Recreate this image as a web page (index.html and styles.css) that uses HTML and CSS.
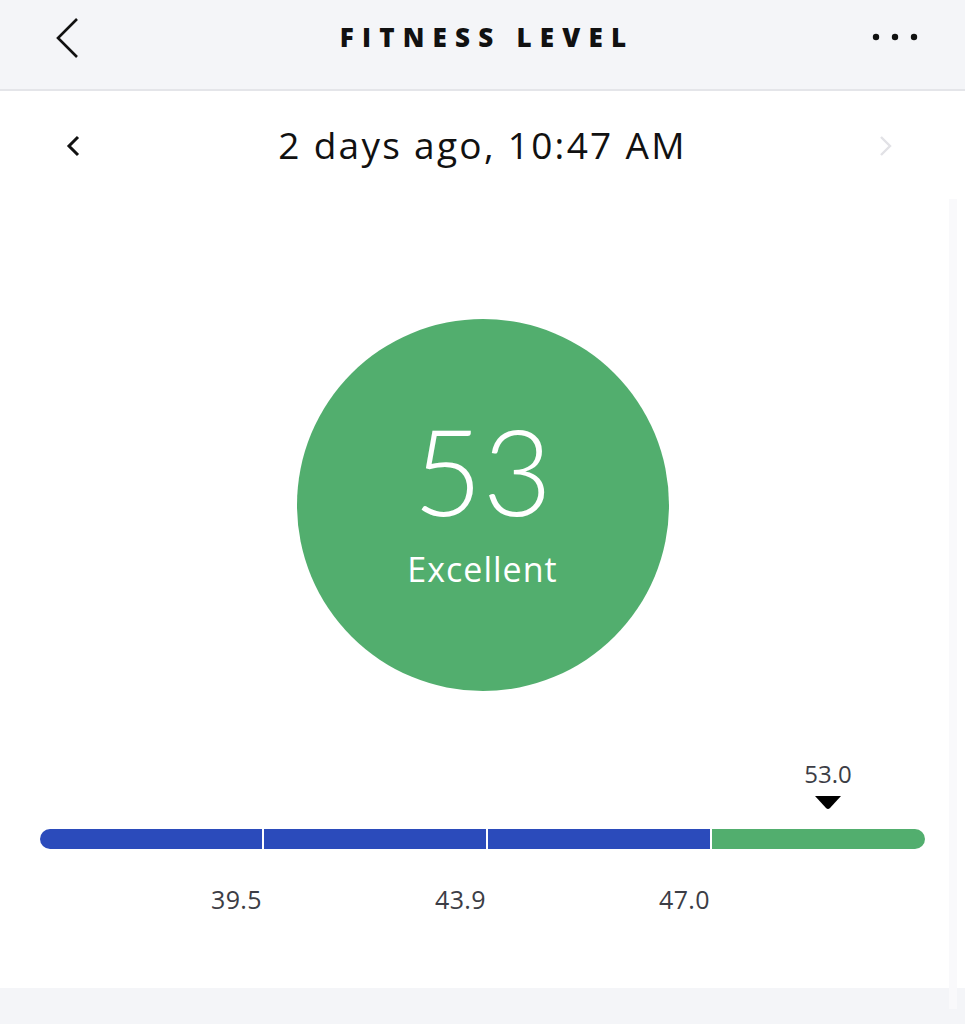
FILE: index.html
```html
<!DOCTYPE html>
<html lang="en">
<head>
    <meta charset="UTF-8">
    <meta name="viewport" content="width=device-width, initial-scale=1.0">
    <title>Fitness Level</title>
    <link rel="stylesheet" href="styles.css">
</head>
<body>
    <div class="topbar">
        <svg class="back" width="30" height="44" viewBox="0 0 30 44">
            <path d="M23 3 L4 22 L23 41" fill="none" stroke="#111" stroke-width="2.6"/>
        </svg>
        <h1 class="title">FITNESS LEVEL</h1>
        <svg class="more" width="50" height="12" viewBox="0 0 50 12">
            <circle cx="6" cy="6" r="3.2" fill="#111"/>
            <circle cx="25" cy="6" r="3.2" fill="#111"/>
            <circle cx="44" cy="6" r="3.2" fill="#111"/>
        </svg>
    </div>

    <div class="content">
        <div class="daterow">
            <svg width="20" height="24" viewBox="0 0 20 24">
                <path d="M14 3 L5 12 L14 21" fill="none" stroke="#111" stroke-width="3"/>
            </svg>
            <p class="date">2 days ago, 10:47 AM</p>
            <svg width="20" height="24" viewBox="0 0 20 24">
                <path d="M6 3 L15 12 L6 21" fill="none" stroke="#e2e2e6" stroke-width="2.4"/>
            </svg>
        </div>

        <div class="score">
            <div class="circle">
                <span class="num">53</span>
                <span class="label">Excellent</span>
            </div>
        </div>

        <div class="scale">
            <div class="marker">
                <span>53.0</span>
                <svg width="28" height="16" viewBox="0 0 28 16">
                    <path d="M1 1 L27 1 L16 13 Q14 15 12 13 Z" fill="#000"/>
                </svg>
            </div>
            <div class="bar">
                <div class="seg blue"></div>
                <div class="seg blue"></div>
                <div class="seg blue"></div>
                <div class="seg green"></div>
            </div>
            <div class="ticks">
                <span>39.5</span>
                <span>43.9</span>
                <span>47.0</span>
                <span></span>
            </div>
        </div>
        <div class="scrollbar"></div>
    </div>
    <div class="footer"></div>
</body>
</html>
```

FILE: styles.css
```css
* {
    margin: 0;
    padding: 0;
    box-sizing: border-box;
}
body {
    font-family: "Open Sans", "Noto Sans", sans-serif;
    background: #ffffff;
    color: #111;
    width: 965px;
    height: 1024px;
    overflow: hidden;
}
.topbar {
    height: 91px;
    background: #f4f5f8;
    border-bottom: 2px solid #e4e5e9;
    display: flex;
    align-items: center;
    justify-content: space-between;
    padding: 0 45px 0 54px;
}
.back {
    margin-top: -14px;
}
.title {
    font-size: 26px;
    font-weight: 800;
    letter-spacing: 8.2px;
    color: #111;
    margin-top: -16px;
    margin-left: 20px;
}
.more {
    margin-top: -16px;
}
.content {
    position: relative;
    height: 897px;
}
.daterow {
    height: 110px;
    display: flex;
    align-items: center;
    justify-content: space-between;
    padding: 0 70px 0 64px;
}
.date {
    font-size: 37px;
    font-weight: 400;
    letter-spacing: 2.3px;
    color: #111;
    margin-top: -4px;
    margin-left: 6px;
}
.score {
    display: flex;
    justify-content: center;
    padding-top: 118px;
}
.circle {
    width: 372px;
    height: 372px;
    border-radius: 50%;
    background: #52ae6e;
    color: #fff;
    display: flex;
    flex-direction: column;
    align-items: center;
    padding-top: 91px;
}
.num {
    font-family: Lato, "Open Sans", sans-serif;
    font-size: 120px;
    font-weight: 300;
    line-height: 120px;
}
.label {
    font-size: 34px;
    font-weight: 400;
    line-height: 42px;
    margin-top: 18px;
    letter-spacing: 1px;
}
.scale {
    padding: 68px 40px 0 40px;
}
.marker {
    margin-left: 760px;
    width: 56px;
    display: flex;
    flex-direction: column;
    align-items: center;
    font-size: 24px;
    font-weight: 500;
    color: #3c3d45;
}
.marker span {
    line-height: 30px;
}
.marker svg {
    margin-top: 6px;
}
.bar {
    margin-top: 18px;
    display: flex;
    gap: 2px;
    height: 20px;
    width: 885px;
    border-radius: 10px;
    overflow: hidden;
}
.seg {
    flex: 1;
}
.seg:last-child {
    flex: 0 0 213px;
}
.blue {
    background: #2b4bbb;
}
.green {
    background: #52ae6e;
}
.ticks {
    display: flex;
    gap: 2px;
    width: 885px;
    margin-top: 35px;
    font-size: 25px;
    font-weight: 500;
    letter-spacing: 0.4px;
    color: #3c3d45;
}
.ticks span {
    flex: 1;
    text-align: right;
    line-height: 30px;
}
.ticks span:last-child {
    flex: 0 0 213px;
}
.scrollbar {
    position: absolute;
    right: 8px;
    top: 108px;
    width: 8px;
    height: 810px;
    background: #f9f9fb;
}
.footer {
    height: 36px;
    background: #f4f5f8;
}
```
